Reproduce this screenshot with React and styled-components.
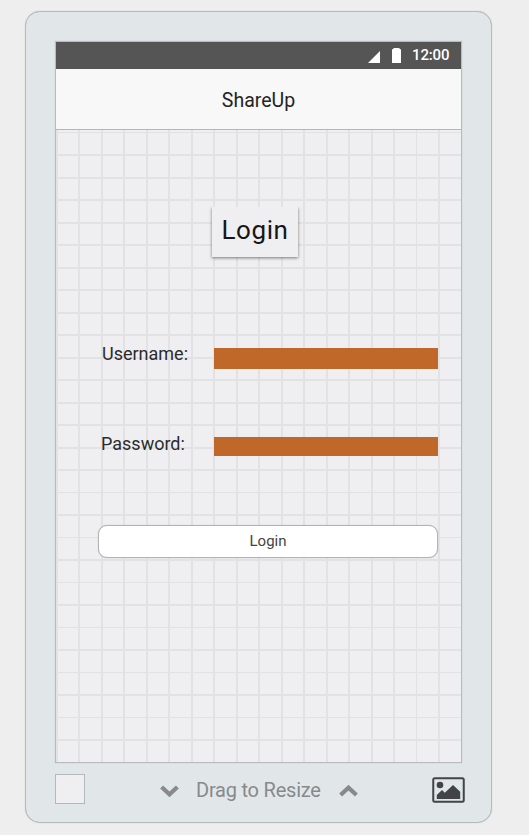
import React from 'react';
import styled, { createGlobalStyle } from 'styled-components';

const GlobalStyle = createGlobalStyle`
  * { box-sizing: border-box; }
  body {
    margin: 0;
    background: #eeeeee;
    font-family: Roboto, "Liberation Sans", sans-serif;
    overflow: hidden;
  }
`;

const Page = styled.main`
  height: 835px;
  padding: 11px 0 0 25px;
`;

const Device = styled.section`
  width: 467px;
  height: 812px;
  padding: 29px 0 0 29px;
  border: 1px solid #b7babc;
  border-radius: 15px;
  background: #e1e7e9;
  box-shadow: 0 0 1px rgba(120, 125, 130, 0.45);
`;

const Screen = styled.div`
  width: 407px;
  height: 722px;
  border: 1px solid #b9bcbe;
  box-shadow: 0 0 1px rgba(120, 125, 130, 0.4);
  display: flex;
  flex-direction: column;
`;

const StatusBar = styled.div`
  height: 27px;
  flex: none;
  padding-right: 11px;
  display: flex;
  align-items: center;
  justify-content: flex-end;
  background: #555555;
  color: #fff;
`;

const SignalIcon = styled.svg`
  width: 12px;
  height: 12px;
  margin: 3px 12px 0 0;
`;

const BatteryIcon = styled.svg`
  width: 9px;
  height: 15px;
  margin: 0 11px 0 0;
`;

const Clock = styled.span`
  font-size: 15px;
  line-height: 27px;
  font-weight: 500;
  letter-spacing: -0.15px;
  width: 38px;
  white-space: nowrap;
`;

const TitleBar = styled.header`
  height: 61px;
  flex: none;
  border-bottom: 1px solid #b4b6b8;
  background: #f8f8f8;
  color: #242424;
  font-size: 19.5px;
  line-height: 64px;
  text-align: center;
`;

const Canvas = styled.div`
  flex: 1;
  background-color: #efeff1;
  background-image:
    repeating-linear-gradient(to right, #e2e2e4 0, #e2e2e4 1.5px, transparent 1.5px, transparent 22.5px),
    repeating-linear-gradient(to bottom, #e2e2e4 0, #e2e2e4 1.5px, transparent 1.5px, transparent 22.5px);
  background-position: 0 0, 0 2px;
  background-size: 450px 720px;
  padding-top: 77px;
`;

const Heading = styled.h1`
  width: 86px;
  height: 50px;
  margin: 0 0 91px 156px;
  background: #efeff1;
  box-shadow: 0 1px 3px rgba(0, 0, 0, 0.5);
  clip-path: inset(0 -5px -6px -5px);
  color: #161616;
  font-size: 26px;
  font-weight: 400;
  letter-spacing: 0.6px;
  line-height: 46px;
  text-align: center;
`;

const Field = styled.label`
  display: flex;
  height: ${(p) => p.$height}px;
  padding-left: ${(p) => p.$indent}px;
  margin-bottom: ${(p) => p.$gap}px;
`;

const FieldLabel = styled.span`
  width: ${(p) => p.$width}px;
  flex: none;
  color: #2b2b2d;
  font-size: 18px;
  line-height: ${(p) => p.$line}px;
`;

const Input = styled.input`
  width: 224px;
  height: 100%;
  padding: 0 6px;
  border: 0;
  border-radius: 0;
  outline: 0;
  background: #c06829;
`;

const LoginButton = styled.button`
  display: block;
  width: 340px;
  height: 33px;
  margin-left: 42px;
  padding: 0 0 2px;
  border: 1px solid #b2b3b5;
  border-radius: 9px;
  background: #fff;
  box-shadow: 0 0 1px rgba(100, 100, 105, 0.4);
  color: #444;
  font: 400 15px Roboto, sans-serif;
`;

const Footer = styled.footer`
  width: 410px;
  height: 54px;
  display: flex;
  align-items: center;
`;

const Swatch = styled.span`
  width: 30px;
  height: 30px;
  margin-bottom: 2px;
  border: 1px solid #b4b7ba;
  background: #efeff1;
`;

const ResizeControl = styled.div`
  width: 198px;
  margin-left: 75px;
  display: flex;
  align-items: center;
  color: #88898b;
`;

const ResizeText = styled.span`
  width: 125px;
  margin: 0 18px 0 17px;
  font-size: 20px;
  letter-spacing: -0.22px;
  line-height: 24px;
  white-space: nowrap;
`;

const ChevronIcon = styled.svg`
  width: 19px;
  height: 12px;
  flex: none;
  margin-top: 2px;
  transform: ${(p) => (p.$up ? 'rotate(180deg)' : 'none')};
`;

const PictureIcon = styled.svg`
  width: 33px;
  height: 26px;
  margin: 0 0 1px auto;
  flex: none;
`;

function Chevron({ up }) {
  return (
    <ChevronIcon $up={up} viewBox="0 0 19 12" aria-hidden="true">
      <path d="M1.6 2 L9.5 9.4 L17.4 2" fill="none" stroke="currentColor" strokeWidth="4.2" />
    </ChevronIcon>
  );
}

export default function App() {
  return (
    <>
      <GlobalStyle />
      <Page>
        <Device>
          <Screen>
            <StatusBar>
              <SignalIcon viewBox="0 0 12 12">
                <path d="M12 0V12H0Z" fill="currentColor" />
              </SignalIcon>
              <BatteryIcon viewBox="0 0 9 15">
                <path d="M1.5 0H7.5V1H8Q9 1 9 2V15H0V2Q0 1 1 1H1.5Z" fill="currentColor" />
              </BatteryIcon>
              <Clock>12:00</Clock>
            </StatusBar>
            <TitleBar>ShareUp</TitleBar>
            <Canvas>
              <Heading>Login</Heading>
              <Field $height={21} $indent={46} $gap={68}>
                <FieldLabel $width={112} $line={12}>Username:</FieldLabel>
                <Input aria-label="Username" />
              </Field>
              <Field $height={19} $indent={45} $gap={69}>
                <FieldLabel $width={113} $line={14}>Password:</FieldLabel>
                <Input type="password" aria-label="Password" />
              </Field>
              <LoginButton type="button">Login</LoginButton>
            </Canvas>
          </Screen>
          <Footer>
            <Swatch />
            <ResizeControl>
              <Chevron />
              <ResizeText>Drag to Resize</ResizeText>
              <Chevron up />
            </ResizeControl>
            <PictureIcon viewBox="0 0 33 26">
              <rect x="1.25" y="1.25" width="30.5" height="23.5" rx="1.5" fill="none" stroke="#424445" strokeWidth="2" />
              <circle cx="8" cy="8" r="3.3" fill="#424445" />
              <path d="M4.8 22V18L10 13L12.8 15.8L21 8L28.2 14.8V22Z" fill="#424445" />
            </PictureIcon>
          </Footer>
        </Device>
      </Page>
    </>
  );
}
